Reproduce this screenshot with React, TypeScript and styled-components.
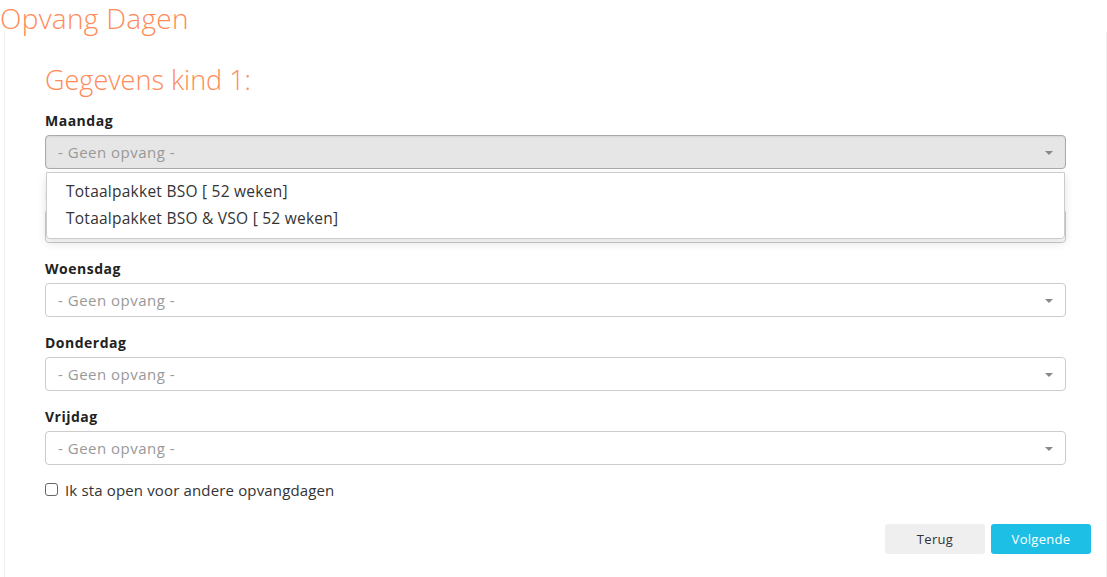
import styled, { createGlobalStyle } from "styled-components";

const GlobalStyle = createGlobalStyle`
  body {
    margin: 0;
    background: #fff;
    font-family: "Open Sans", "Liberation Sans", sans-serif;
    color: #333;
  }
`;

const days = ["Maandag", "Dinsdag", "Woensdag", "Donderdag", "Vrijdag"];

const options = [
  "Totaalpakket BSO [ 52 weken]",
  "Totaalpakket BSO & VSO [ 52 weken]",
];

const Page = styled.div`
  width: 1107px;
  height: 577px;
  overflow: hidden;
`;

const PageTitle = styled.h1`
  margin: 0;
  height: 32px;
  font-size: 28px;
  line-height: 36px;
  font-weight: 300;
  letter-spacing: 0.3px;
  color: #ff8a57;
  position: relative;
  z-index: 1;
`;

const Card = styled.div`
  margin-left: 4px;
  border-left: 1px solid #f0f0f0;
  border-right: 1px solid #f0f0f0;
  padding: 30px 15px 30px 40px;
`;

const Form = styled.div`
  margin-right: 25px;
`;

const Heading = styled.h2`
  margin: 0 0 12px;
  font-size: 27px;
  line-height: 36px;
  font-weight: 300;
  color: #ff8a57;
`;

const Field = styled.div`
  position: relative;
  margin-bottom: 15px;
`;

const Label = styled.div`
  font-size: 14px;
  line-height: 21px;
  font-weight: 700;
  letter-spacing: 0.5px;
  color: #222;
  margin-bottom: 4px;
`;

const Select = styled.div<{ $open?: boolean }>`
  position: relative;
  box-sizing: border-box;
  height: 34px;
  border: 1px solid ${(p) => (p.$open ? "#aaa" : "#ccc")};
  border-radius: 4px;
  background: ${(p) => (p.$open ? "#e6e6e6" : "#fff")};
  box-shadow: ${(p) => (p.$open ? "inset 0 1px 2px rgba(0,0,0,0.08)" : "none")};
  display: flex;
  align-items: center;
  padding-left: 12px;
  font-size: 15px;
  letter-spacing: 0.5px;
  color: #999;
`;

const Arrow = styled.span`
  position: absolute;
  right: 12px;
  top: 15px;
  width: 0;
  height: 0;
  border-left: 4px solid transparent;
  border-right: 4px solid transparent;
  border-top: 4px solid #888;
`;

const Menu = styled.ul`
  position: absolute;
  top: 62px;
  left: 1px;
  right: 1px;
  z-index: 2;
  margin: 0;
  padding: 4.5px 0 6.5px;
  list-style: none;
  background: #fff;
  border: 1px solid #ccc;
  border-radius: 0 0 4px 4px;
  box-shadow: 0 4px 10px rgba(0, 0, 0, 0.12);
`;

const MenuItem = styled.li`
  height: 27px;
  line-height: 27px;
  padding-left: 19px;
  font-size: 15.5px;
  letter-spacing: 0.25px;
  color: #333;
`;

const CheckRow = styled.label`
  display: flex;
  align-items: center;
  gap: 7px;
  font-size: 15px;
  line-height: 21px;
  letter-spacing: 0.15px;
  color: #333;
`;

const Check = styled.input`
  appearance: none;
  margin: 0;
  width: 13px;
  height: 13px;
  border: 1px solid #666;
  border-radius: 3px;
  background: #fff;
  position: relative;
  top: -1px;
`;

const Actions = styled.div`
  display: flex;
  justify-content: flex-end;
  gap: 6px;
  margin-top: 23px;
`;

const Button = styled.button<{ $primary?: boolean }>`
  width: 100px;
  height: 30px;
  border: none;
  border-radius: 3px;
  font-family: inherit;
  font-size: 13px;
  letter-spacing: 0.3px;
  background: ${(p) => (p.$primary ? "#1ebfe4" : "#efefef")};
  color: ${(p) => (p.$primary ? "#fff" : "#333")};
`;

export default function App() {
  return (
    <Page>
      <GlobalStyle />
      <PageTitle>Opvang Dagen</PageTitle>
      <Card>
        <Form>
          <Heading>Gegevens kind 1:</Heading>
          {days.map((day, i) => (
            <Field key={day}>
              <Label>{day}</Label>
              <Select $open={i === 0}>
                - Geen opvang -
                <Arrow />
              </Select>
              {i === 0 && (
                <Menu>
                  {options.map((o) => (
                    <MenuItem key={o}>{o}</MenuItem>
                  ))}
                </Menu>
              )}
            </Field>
          ))}
          <CheckRow>
            <Check type="checkbox" />
            Ik sta open voor andere opvangdagen
          </CheckRow>
        </Form>
        <Actions>
          <Button>Terug</Button>
          <Button $primary>Volgende</Button>
        </Actions>
      </Card>
    </Page>
  );
}
